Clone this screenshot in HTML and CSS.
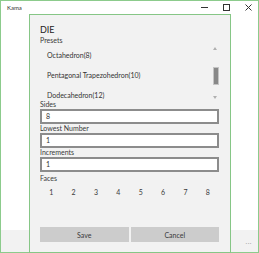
FILE: index.html
```html
<!DOCTYPE html>
<html lang="en">
<head>
    <meta charset="UTF-8" />
    <title>Kama</title>
    <link rel="stylesheet" href="styles.css">
</head>
<body>

    <div class="window">
        <!-- Title bar -->
        <div class="titlebar">
            <span class="title">Kama</span>
            <div class="controls">
                <svg class="ctl" width="7" height="7" viewBox="0 0 7 7"><line x1="0" y1="3.5" x2="7" y2="3.5" stroke="#333" stroke-width="1"/></svg>
                <svg class="ctl" width="7" height="7" viewBox="0 0 7 7"><rect x="0.5" y="0.5" width="6" height="6" fill="none" stroke="#333" stroke-width="1"/></svg>
                <svg class="ctl" width="7" height="7" viewBox="0 0 7 7"><path d="M0.5 0.5 L6.5 6.5 M6.5 0.5 L0.5 6.5" stroke="#333" stroke-width="1"/></svg>
            </div>
        </div>

        <div class="page"></div>

        <!-- Command bar -->
        <div class="appbar">
            <span class="more">...</span>
        </div>

        <!-- Die dialog -->
        <div class="dialog">
            <div class="heading">DIE</div>
            <div class="label">Presets</div>
            <div class="presets">
                <div class="item">Octahedron(8)</div>
                <div class="item">Pentagonal Trapezohedron(10)</div>
                <div class="item">Dodecahedron(12)</div>
                <svg class="arrow up" width="4" height="3" viewBox="0 0 4 3"><path d="M0 3 L2 0 L4 3 Z" fill="#b0b0b0"/></svg>
                <div class="thumb"></div>
                <svg class="arrow down" width="4" height="3" viewBox="0 0 4 3"><path d="M0 0 L2 3 L4 0 Z" fill="#b0b0b0"/></svg>
            </div>

            <div class="label">Sides</div>
            <div class="field">8</div>
            <div class="label">Lowest Number</div>
            <div class="field">1</div>
            <div class="label">Increments</div>
            <div class="field">1</div>

            <div class="label faces-label">Faces</div>
            <div class="faces">
                <span>1</span><span>2</span><span>3</span><span>4</span>
                <span>5</span><span>6</span><span>7</span><span>8</span>
            </div>

            <div class="buttons">
                <button>Save</button>
                <button>Cancel</button>
            </div>
        </div>
    </div>

</body>
</html>
```

FILE: styles.css
```css
* {
    box-sizing: border-box;
}

body {
    margin: 0;
    font-family: Lato, "Noto Sans", sans-serif;
    color: #333;
}

.window {
    position: relative;
    width: 259px;
    height: 253px;
    background: #fff;
    border: 1px solid #8ccb8c;
    display: flex;
    flex-direction: column;
}

.titlebar {
    height: 13px;
    display: flex;
    align-items: center;
    justify-content: space-between;
    padding: 0 6px 0 6px;
}

.title {
    font-size: 6px;
    color: #333;
}

.controls {
    display: flex;
    gap: 15px;
}

.ctl {
    display: block;
}

.page {
    flex: 1;
}

.appbar {
    height: 22px;
    background: #f2f2f2;
    display: flex;
    justify-content: flex-end;
    align-items: center;
    padding-right: 6px;
}

.more {
    font-size: 7px;
    color: #a0a0a0;
    letter-spacing: 0.5px;
}

/* dialog sits over the page */
.dialog {
    position: absolute;
    left: 28px;
    top: 13px;
    width: 202px;
    height: 239px;
    background: #f2f2f2;
    border: 1px solid #86c686;
    padding: 9px 11px 10px 10px;
    display: flex;
    flex-direction: column;
}

.heading {
    font-size: 9px;
    line-height: 12px;
    color: #222;
}

.label {
    font-size: 7px;
    line-height: 9px;
    color: #3a3a3a;
}

.presets {
    position: relative;
    height: 55px;
    overflow: hidden;
}

.item {
    height: 20px;
    line-height: 20px;
    padding-left: 7px;
    font-size: 7px;
    color: #333;
}

.arrow {
    position: absolute;
    right: 2px;
    display: block;
}

.arrow.up {
    top: 2px;
}

.arrow.down {
    top: 51px;
}

.thumb {
    position: absolute;
    right: 0;
    top: 22px;
    width: 6px;
    height: 18px;
    background: #888;
    border: 1px solid #c4c4c4;
}

.field {
    height: 15px;
    background: #fff;
    border: 2px solid #8c8c8c;
    font-size: 7px;
    line-height: 11px;
    padding-left: 4px;
    color: #333;
}

.faces-label {
    margin-top: 2px;
}

.faces {
    margin-top: 4px;
    display: grid;
    grid-template-columns: repeat(8, 1fr);
    font-size: 7px;
    line-height: 10px;
    text-align: center;
    color: #3a3a3a;
}

.buttons {
    margin-top: auto;
    display: grid;
    grid-template-columns: 1fr 1fr;
    gap: 2px;
}

button {
    height: 15px;
    border: none;
    background: #cccccc;
    font-family: inherit;
    font-size: 7px;
    color: #3a3a3a;
    padding: 0;
}
```
